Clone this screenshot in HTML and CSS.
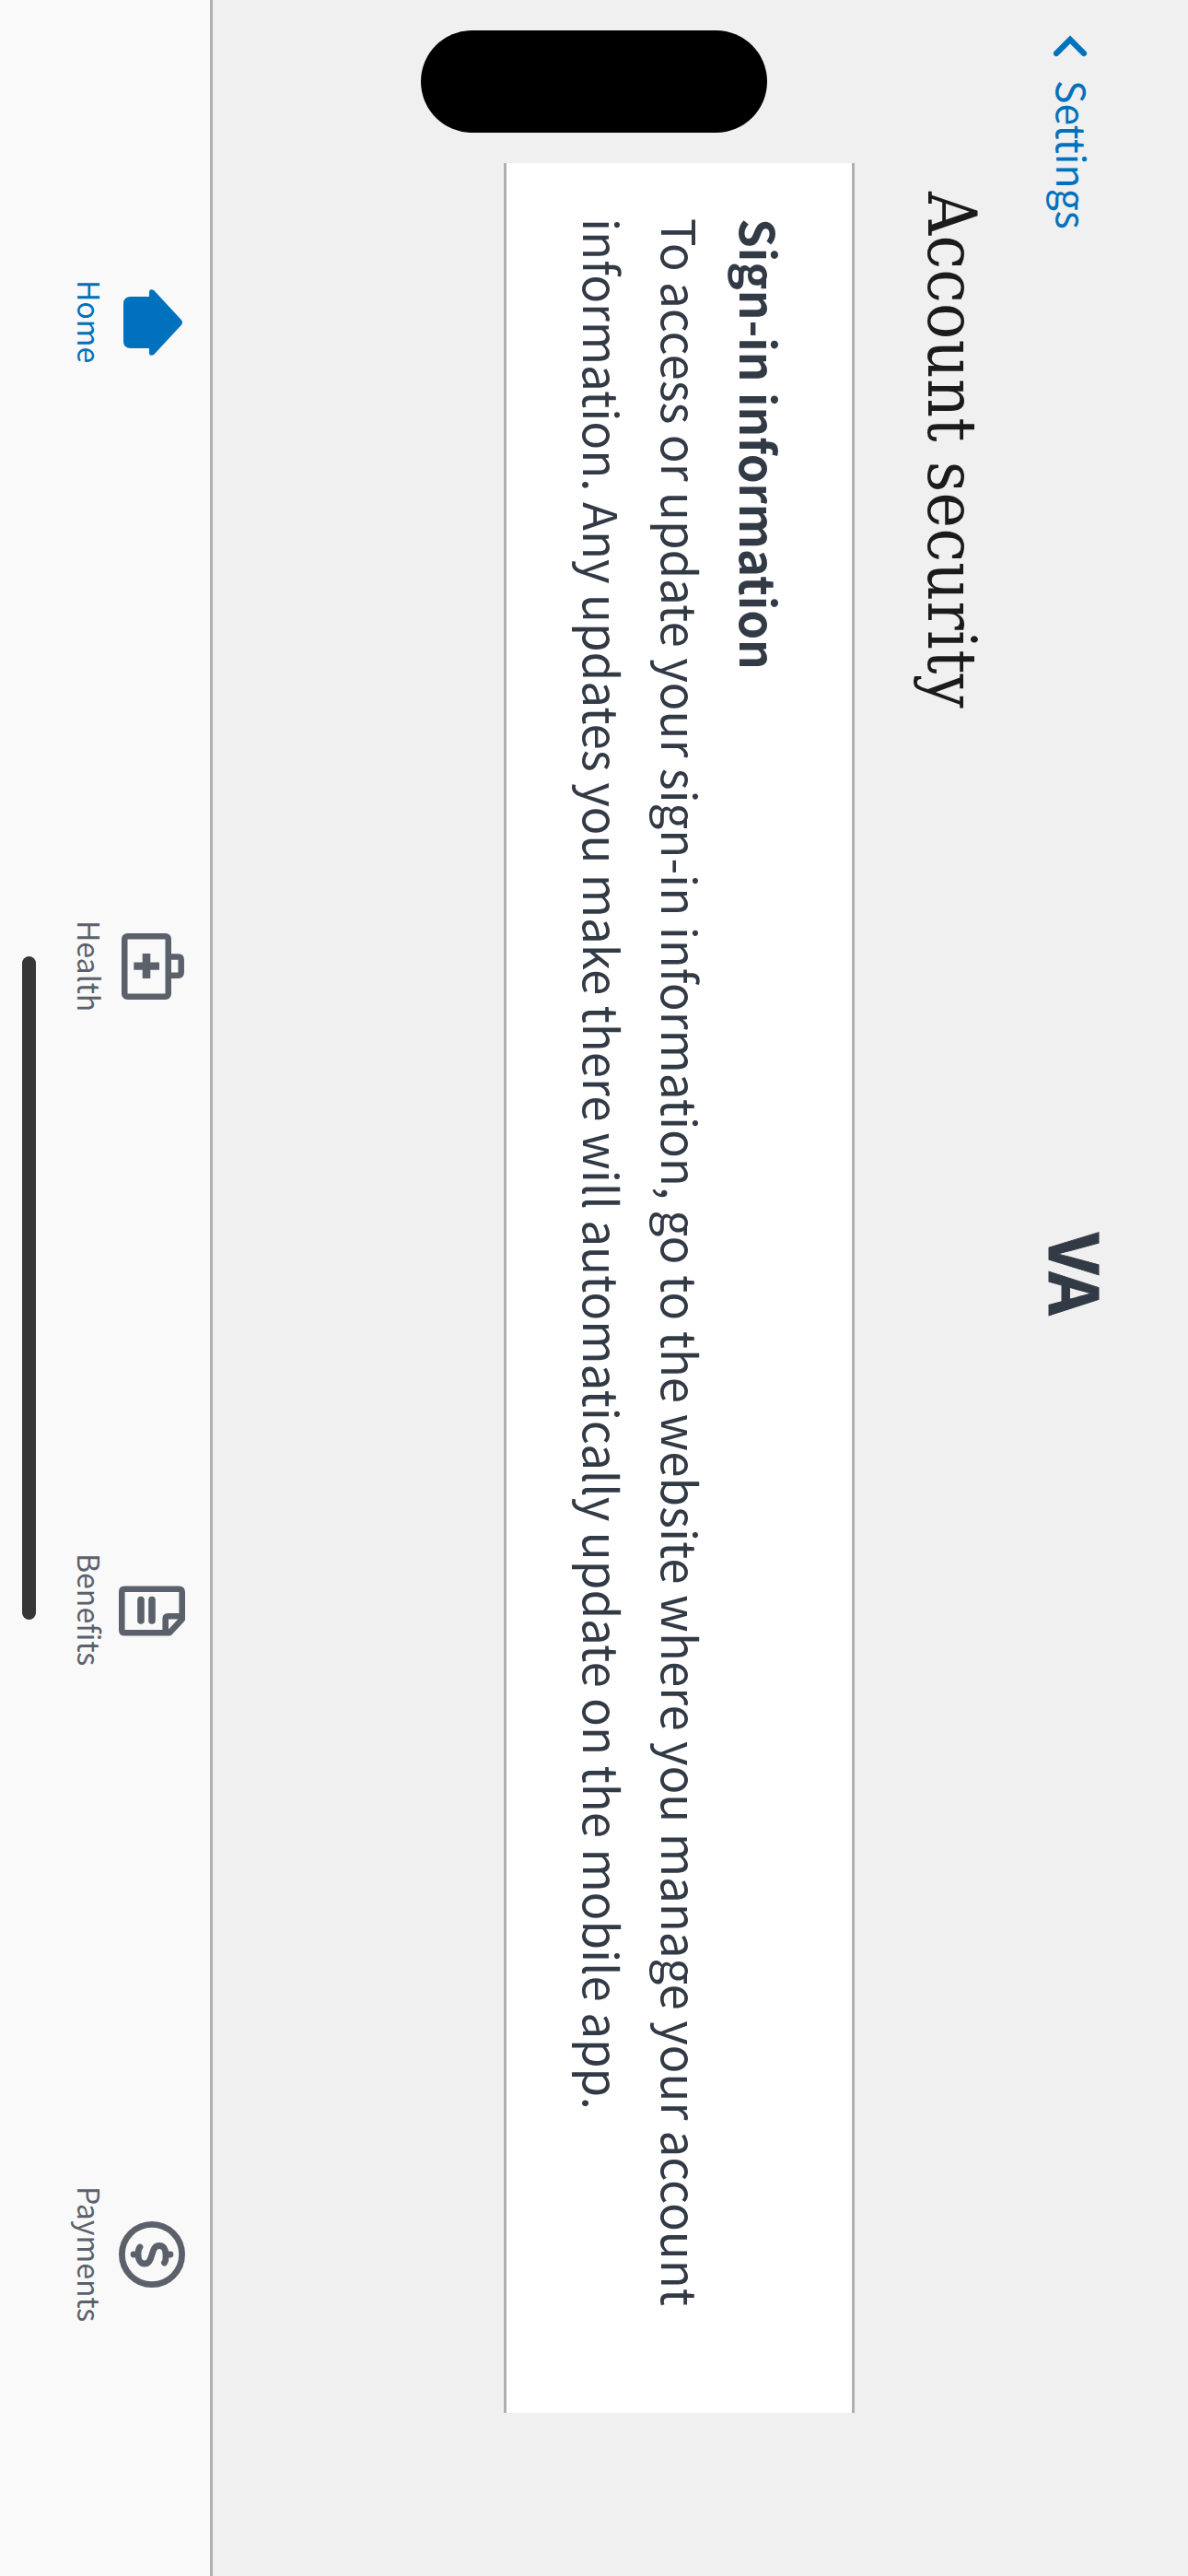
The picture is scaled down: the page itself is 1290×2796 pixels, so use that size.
FILE: index.html
```html
<!DOCTYPE html>
<html lang="en">
<head>
<meta charset="utf-8">
<title>Account security</title>
<link rel="stylesheet" href="styles.css">
</head>
<body>
<div class="screen">
  <header class="top-bar">
    <a class="back">
      <svg class="chevron" viewBox="0 0 38 38"><path d="M26 4 11 19 26 34" fill="none" stroke="currentColor" stroke-width="6.2" stroke-linecap="round" stroke-linejoin="miter"/></svg>
      <span class="back-label">Settings</span>
    </a>
    <div class="logo">VA</div>
  </header>
  <main class="content">
    <h1 class="title">Account security</h1>
    <section class="card">
      <h2 class="card-title">Sign-in information</h2>
      <p class="card-text">To access or update your sign-in information, go to the website where you manage your account information. Any updates you make there will automatically update on the mobile app.</p>
    </section>
  </main>
  <nav class="tabs">
    <a class="tab active">
      <svg class="icon" viewBox="0 0 72 72"><path fill="currentColor" d="M33 4.300Q36 1.700 39 4.300L71 34Q73.500 39 68.500 39H64V59Q64 67 56 67H16Q8 67 8 59V39H3.500Q-1.500 39 1 34Z"/></svg>
      <span class="tab-label">Home</span>
    </a>
    <a class="tab">
      <svg class="icon" viewBox="0 0 72 72"><g fill="none" stroke="currentColor" stroke-width="6.500"><rect x="3.250" y="18.250" width="65.500" height="47.500" rx="3"/><path d="M25.500 18V7.500Q25.500 4.300 28.700 4.300H42.500Q45.700 4.300 45.700 7.500V18"/></g><path fill="currentColor" d="M31.500 28H39.800V37.700H49V46.300H39.800V55.700H31.500V46.300H22V37.700H31.500Z"/></svg>
      <span class="tab-label">Health</span>
    </a>
    <a class="tab">
      <svg class="icon" viewBox="0 0 72 72"><g fill="none" stroke="currentColor" stroke-width="6.600"><path stroke-linejoin="round" d="M15.800 3.300H45.500L60.200 17V65.700Q60.200 68.700 57.200 68.700H15.800Q12.800 68.700 12.800 65.700V6.300Q12.800 3.300 15.800 3.300Z"/><path d="M42.300 3.300V18.500Q42.300 21.300 45.100 21.300H60.200"/><path stroke-width="7.600" stroke-linecap="round" d="M24.500 36H47M24.500 48H47"/></g></svg>
      <span class="tab-label">Benefits</span>
    </a>
    <a class="tab">
      <svg class="icon" viewBox="0 0 72 72"><g fill="none" stroke="currentColor" stroke-width="6.800"><circle cx="36" cy="36" r="32.600"/><path stroke-linecap="round" d="M36 16V20M36 52V56"/><path stroke-linecap="round" stroke-linejoin="round" d="M45 22.500C43.500 21 41 21 36 21C30 21 26.500 23.500 26.500 28C26.500 33 30.500 34.500 36 36C42 37.700 46 39.200 46 44C46 48.500 42 51 36 51C31.500 51 29.500 50.500 28 49"/></g></svg>
      <span class="tab-label">Payments</span>
    </a>
  </nav>
  <div class="island"></div>
  <div class="home-indicator"></div>
</div>
</body>
</html>
```
FILE: styles.css
```css
* { box-sizing: border-box; }

html, body {
  margin: 0;
  background: #f0f0f0;
}

/* Landscape screen turned a quarter clockwise: lines run down, blocks run right to left */
.screen {
  position: relative;
  writing-mode: vertical-rl;
  text-orientation: sideways;
  display: flex;
  flex-direction: column;
  width: 1290px;
  height: 2796px;
  overflow: hidden;
  background: #f0f0f0;
  color: #323a45;
  font-family: "Noto Sans CJK JP", "Noto Sans", sans-serif;
}

.top-bar {
  display: grid;
  grid-template-columns: 1fr auto 1fr;
  align-items: center;
  block-size: 176px;
  padding-block-start: 80px;
  padding-inline: 32px 64px;
}

.back { display: flex; align-items: center; gap: 17px; color: #0071bc; }
.chevron { display: block; width: 38px; height: 38px; transform: rotate(90deg); }
.back-label { font-size: 42.700px; line-height: 60px; margin-block-end: 7px; }

.logo {
  font-size: 73.500px;
  font-weight: 700;
  line-height: 76px;
  letter-spacing: -1.500px;
  margin-block-end: 17px;
  -webkit-text-stroke: 1px currentColor;
}

.content { flex: 1; padding-inline: 177px; }

.title {
  margin: 0;
  padding-block-start: 36px;
  padding-inline-start: 31px;
  block-size: 186px;
  font-family: "DejaVu Serif", serif;
  font-stretch: condensed;
  font-weight: 400;
  font-size: 72.500px;
  line-height: 90px;
  letter-spacing: 0.300px;
  color: #1b1b1b;
}

.card {
  block-size: 381px;
  padding-block: 58px;
  padding-inline: 60px;
  background: #fff;
  border-block: 3px solid #aeb0b5;
}
.card-title,
.card-text { margin: 0; font-size: 51px; line-height: 85px; }
.card-title { font-weight: 700; }

.tabs {
  display: grid;
  grid-template-columns: repeat(4, 1fr);
  block-size: 231px;
  border-block-start: 3px solid #aeb0b5;
  background: #f9f9f9;
}
.tab {
  display: flex;
  flex-direction: column;
  align-items: center;
  gap: 6px;
  padding-block-start: 27px;
  color: #5b616b;
}
.active { color: #0071bc; }
.icon { display: block; width: 72px; height: 72px; overflow: visible; transform: rotate(90deg); }
.tab-label { font-size: 32.100px; line-height: 50px; }

.island {
  position: absolute;
  left: 457px;
  top: 33px;
  width: 376px;
  height: 111px;
  border-radius: 56px;
  background: #000;
}
.home-indicator {
  position: absolute;
  left: 24px;
  top: 1038px;
  width: 15px;
  height: 720px;
  border-radius: 8px;
  background: #363636;
}
```
